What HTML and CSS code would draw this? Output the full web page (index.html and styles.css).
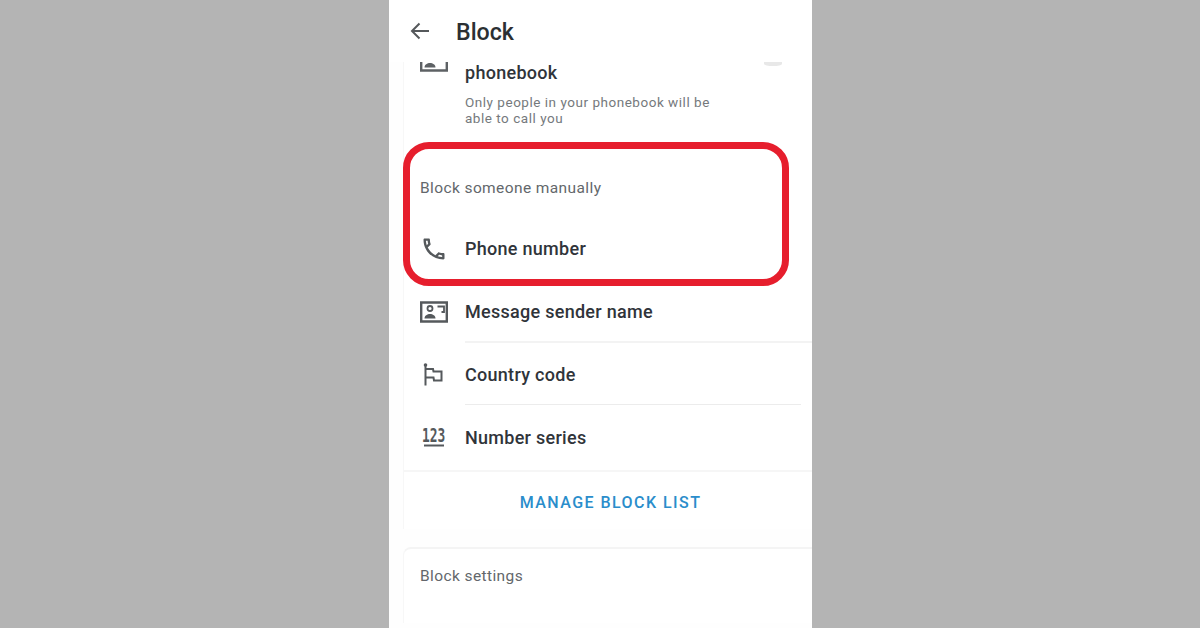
FILE: index.html
```html
<!DOCTYPE html>
<html lang="en">
<head>
<meta charset="utf-8">
<title>Block</title>
<link rel="stylesheet" href="styles.css">
</head>
<body>
<main class="phone">
  <header class="topbar">
    <svg class="back" viewBox="0 0 24 24" width="24" height="24"><path d="M21 12H4M11.500 4.500 4 12l7.500 7.500" fill="none" stroke="#55585b" stroke-width="2"/></svg>
    <h1 class="title">Block</h1>
  </header>
  <div class="scroller">
    <section class="card card-first">
      <div class="clip-row">
        <div class="clip-icon"><svg class="sender-icon" viewBox="0 0 28 22" width="28" height="22"><path d="M1.200 1.500h25.600v19H1.200z" fill="none" stroke="#5d6164" stroke-width="2.400"/><circle cx="10" cy="7.500" r="2.500" fill="none" stroke="#5d6164" stroke-width="1.800"/><path d="M4.500 17.500c0-6 11-6 11 0z" fill="#5d6164"/><path d="M17.500 5.500H24V11h-2.500" fill="none" stroke="#5d6164" stroke-width="1.800"/></svg></div>
        <div class="clip-text">
          <div class="row-label">phonebook</div>
          <p class="desc">Only people in your phonebook will be<br>able to call you</p>
        </div>
        <div class="toggle-edge"></div>
      </div>
      <h2 class="section-label">Block someone manually</h2>
      <div class="row row-first">
        <div class="icon-cell"><svg viewBox="0 0 24 24" width="28" height="28"><path fill="#55595c" d="M6.540 5c.06.89.21 1.760.45 2.590l-1.200 1.200c-.41-1.200-.67-2.470-.76-3.790h1.510m9.860 12.020c.85.24 1.720.39 2.600.45v1.490c-1.320-.09-2.590-.35-3.800-.75l1.200-1.190M7.500 3H4c-.55 0-1 .45-1 1 0 9.390 7.610 17 17 17 .55 0 1-.45 1-1v-3.490c0-.55-.45-1-1-1-1.240 0-2.450-.2-3.570-.57-.1-.04-.21-.05-.31-.05-.26 0-.51.1-.71.29l-2.200 2.200c-2.830-1.450-5.150-3.760-6.590-6.590l2.200-2.200c.28-.28.36-.67.25-1.020C8.700 6.450 8.500 5.250 8.500 4c0-.55-.45-1-1-1z"/></svg></div>
        <div class="row-label">Phone number</div>
      </div>
      <div class="row">
        <div class="icon-cell"><svg viewBox="0 0 28 22" width="28" height="22"><path d="M1.200 1.500h25.600v19H1.200z" fill="none" stroke="#55595c" stroke-width="2.400"/><circle cx="10" cy="7.500" r="2.500" fill="none" stroke="#55595c" stroke-width="1.800"/><path d="M4.500 17.500c0-6 11-6 11 0z" fill="#55595c"/><path d="M17.500 5.500H24V11h-2.500" fill="none" stroke="#55595c" stroke-width="1.800"/></svg></div>
        <div class="row-label">Message sender name</div>
      </div>
      <div class="rule rule-long"></div>
      <div class="row">
        <div class="icon-cell"><svg viewBox="0 0 24 24" width="24" height="24"><path d="M5.500 22.500V1.500M5.500 6H13l.5 2.500h8v9H14l-.5-3h-8" fill="none" stroke="#55595c" stroke-width="2"/><circle cx="5.500" cy="2" r="1.800" fill="#55595c"/></svg></div>
        <div class="row-label">Country code</div>
      </div>
      <div class="rule"></div>
      <div class="row">
        <div class="icon-cell"><svg viewBox="0 0 28 28" width="28" height="28"><text class="digits" x="3" y="18.500" transform="scale(.68 1)">123</text><path d="M4 21.500h20" stroke="#55595c" stroke-width="2"/></svg></div>
        <div class="row-label">Number series</div>
      </div>
      <div class="action-wrap"><span class="action">MANAGE BLOCK LIST</span></div>
    </section>
    <section class="card card-second">
      <h2 class="section-label section-label-second">Block settings</h2>
    </section>
  </div>
  <div class="highlight"></div>
</main>
</body>
</html>
```

FILE: styles.css
```css
* { box-sizing: border-box; }
html, body { margin: 0; height: 100%; }
body {
  background: #b4b4b4;
  display: flex;
  justify-content: center;
  overflow: hidden;
  font-family: Roboto, "Liberation Sans", sans-serif;
  padding-left: 1px;
}
.phone {
  position: relative;
  width: 423px;
  height: 628px;
  background: #fff;
  display: flex;
  flex-direction: column;
  overflow: hidden;
}
.topbar {
  height: 62px;
  flex: none;
  display: flex;
  align-items: center;
  padding: 0 0 0 19px;
  gap: 24px;
}
.title {
  margin: 2px 0 0;
  font-size: 23.200px;
  font-weight: 500;
  color: #2b2f33;
}
.scroller {
  flex: 1;
  overflow: hidden;
  padding-left: 14px;
  background: #fefefe;
}
.card {
  background: #fff;
  border-left: 1px solid #f7f7f7;
}
.card-first { height: 467px; }
.card-second { margin-top: 18px; border-top: 2px solid #f4f4f4; border-radius: 8px 0 0 0; }
.clip-row { display: flex; height: 80px; position: relative; }
.clip-icon {
  width: 61px;
  height: 10px;
  padding-left: 16px;
  flex: none;
  line-height: 0;
  overflow: hidden;
}
.sender-icon { margin-top: -12px; }
.clip-text { padding-top: 0; }
.row-label {
  font-size: 18px;
  font-weight: 500;
  color: #30343a;
  letter-spacing: .28px;
  line-height: 22px;
}
.desc {
  margin: 10px 0 0;
  font-size: 13.500px;
  line-height: 16px;
  color: #75797c;
  letter-spacing: .52px;
}
.toggle-edge {
  position: absolute;
  right: 30px;
  top: 0;
  width: 18px;
  height: 4px;
  background: #e8e8e8;
  border-radius: 0 0 50% 50%;
}
.section-label {
  margin: 0;
  font-size: 15.500px;
  font-weight: 400;
  color: #63676b;
  letter-spacing: .4px;
  line-height: 20px;
  padding: 36px 0 0 16px;
  height: 74px;
}
.section-label-second { padding-top: 17px; }
.row {
  display: flex;
  align-items: center;
  height: 62px;
  padding-top: 3px;
}
.row-first { height: 63px; padding-top: 2px; }
.icon-cell {
  width: 61px;
  height: 28px;
  padding-left: 16px;
  flex: none;
  display: flex;
  align-items: center;
  line-height: 0;
}
.digits {
  font-family: "DejaVu Sans Mono", monospace;
  font-weight: 700;
  font-size: 19px;
  fill: #55595c;
}
.rule {
  height: 1px;
  margin-left: 61px;
  margin-right: 11px;
  background: #ececec;
}
.rule-long { margin-right: 0; background: #f3f3f3; height: 2px; margin-bottom: -1px; }
.action-wrap {
  margin-top: 3px;
  border-top: 2px solid #f6f6f6;
  height: 62px;
  padding-left: 5px;
  display: flex;
  align-items: center;
  justify-content: center;
}
.action {
  font-size: 16px;
  font-weight: 500;
  letter-spacing: 1.450px;
  color: #2a8dcb;
}
.highlight {
  position: absolute;
  left: 14px;
  top: 142px;
  width: 386px;
  height: 144px;
  border: 7px solid #e61e2d;
  border-radius: 26px;
}
```
